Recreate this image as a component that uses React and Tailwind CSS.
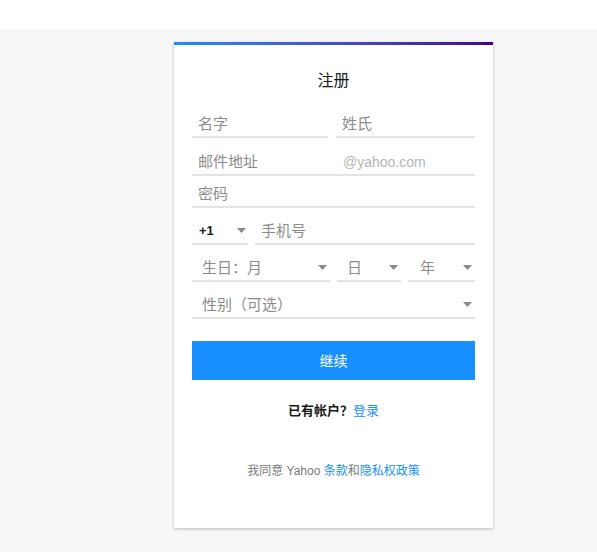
import React from 'react';

const font = { fontFamily: '"Liberation Sans", "Noto Sans CJK SC", sans-serif' };

const Caret = () => (
  <svg width="9" height="5" viewBox="0 0 9 5" className="shrink-0">
    <path d="M0 0h9L4.5 5z" fill="#8a8a8a" />
  </svg>
);

const Input = ({ label, className = '', labelClass = 'text-[#8c8c8c]' }) => (
  <div className={`h-[32px] border-b-2 border-[#e4e4e4] flex items-center pl-[6px] pt-[6px] ${className}`}>
    <span className={`text-[15px] leading-[20px] ${labelClass}`}>{label}</span>
  </div>
);

const Select = ({ label, className = '', pl = 'pl-[10px]', pr = 'pr-[3px]', labelClass = 'text-[15px] text-[#8c8c8c]' }) => (
  <div className={`h-[32px] border-b-2 border-[#e4e4e4] flex items-center justify-between pt-[5px] ${pl} ${pr} ${className}`}>
    <span className={`leading-[20px] ${labelClass}`}>{label}</span>
    <Caret />
  </div>
);

export default function App() {
  return (
    <div className="w-[597px] h-[552px] bg-white" style={font}>
      <div className="h-[29px] bg-white" />
      <div className="h-[523px] bg-[#f7f7f7] pt-[13px]">
        <div className="ml-[174px] w-[319px] bg-white shadow-[0_1px_3px_rgba(0,0,0,0.25)]">
          <div className="h-[3px] bg-gradient-to-r from-[#188fff] to-[#400090]" />
          <div className="px-[18px] pb-[47px]">
            <h1 className="mt-[25px] text-center text-[16px] leading-[22px] text-[#1a1a1a]">注册</h1>

            <div className="mt-[14px] flex gap-[8px]">
              <Input label="名字" className="w-[136px]" />
              <Input label="姓氏" className="flex-1" />
            </div>

            <div className="mt-[6px] h-[32px] border-b-2 border-[#e4e4e4] flex items-center pt-[6px]">
              <span className="w-[151px] pl-[6px] text-[15px] leading-[20px] text-[#8c8c8c]">邮件地址</span>
              <span className="text-[14px] leading-[20px] text-[#b5b5b5]">@yahoo.com</span>
            </div>

            <Input label="密码" />

            <div className="mt-[5px] flex gap-[7px]">
              <Select label="+1" className="w-[56px]" pl="pl-[7px]" pr="pr-[2px]" labelClass="text-[13px] font-bold text-[#1a1a1a]" />
              <Input label="手机号" className="flex-1" />
            </div>

            <div className="mt-[5px] flex gap-[7px]">
              <Select label="生日：月" className="w-[138px]" pr="pr-[3px]" />
              <Select label="日" className="w-[64px]" />
              <Select label="年" className="flex-1" pl="pl-[12px]" pr="pr-[3px]" />
            </div>

            <Select label="性别（可选）" className="mt-[5px]" pr="pr-[3px]" />

            <button className="mt-[22px] w-full h-[39px] bg-[#188fff] text-white text-[14px] leading-[20px]">
              继续
            </button>

            <p className="mt-[21px] text-center text-[13px] leading-[20px] text-[#1a1a1a] font-bold">
              已有帐户？<span className="text-[#188fff] font-normal">登录</span>
            </p>

            <p className="mt-[40px] text-center text-[12px] leading-[20px] text-[#7a7a7a]">
              我同意 Yahoo <span className="text-[#188fff]">条款</span>和<span className="text-[#188fff]">隐私权政策</span>
            </p>
          </div>
        </div>
      </div>
    </div>
  );
}
